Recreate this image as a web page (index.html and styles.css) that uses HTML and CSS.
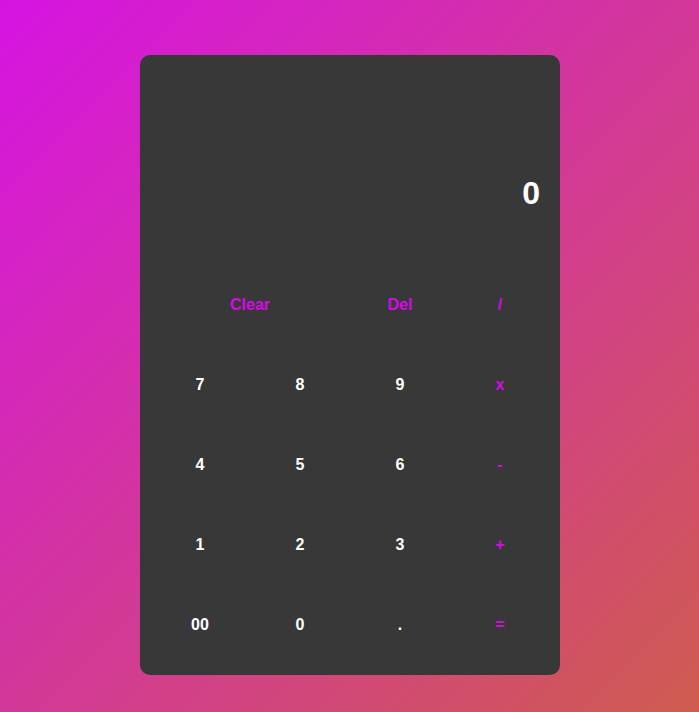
FILE: index.html
```html
<!DOCTYPE html>
<html lang="en">
<head>
<meta charset="utf-8">
<title>Calculator</title>
<link rel="stylesheet" href="styles.css">
</head>
<body>
<div class="calculator">
  <div class="display"><span class="value">0</span></div>
  <div class="keys">
    <button class="key accent span-2">Clear</button>
    <button class="key accent">Del</button>
    <button class="key accent">/</button>
    <button class="key">7</button>
    <button class="key">8</button>
    <button class="key">9</button>
    <button class="key accent">x</button>
    <button class="key">4</button>
    <button class="key">5</button>
    <button class="key">6</button>
    <button class="key accent">-</button>
    <button class="key">1</button>
    <button class="key">2</button>
    <button class="key">3</button>
    <button class="key accent">+</button>
    <button class="key">00</button>
    <button class="key">0</button>
    <button class="key">.</button>
    <button class="key accent">=</button>
  </div>
</div>
</body>
</html>
```
FILE: styles.css
```css
html, body {
  margin: 0;
  padding: 0;
}
body {
  min-height: 100vh;
  background: linear-gradient(to bottom right, #d614e2, #cf5c4f);
  font-family: "Liberation Sans", Arial, sans-serif;
  padding-top: 55px;
  padding-left: 1px;
  box-sizing: border-box;
}
.calculator {
  width: 420px;
  margin: 0 auto;
  box-sizing: border-box;
  padding: 10px;
  background: #383838;
  border-radius: 10px;
}
.display {
  height: 200px;
  box-sizing: border-box;
  display: flex;
  align-items: flex-end;
  justify-content: flex-end;
  padding: 0 10px 53px 0;
}
.value {
  color: #ffffff;
  font-size: 32px;
  font-weight: bold;
}
.keys {
  display: grid;
  grid-template-columns: repeat(4, 100px);
  grid-auto-rows: 80px;
}
.key {
  border: none;
  background: transparent;
  color: #ffffff;
  font-family: "Liberation Sans", Arial, sans-serif;
  font-size: 16px;
  font-weight: bold;
  padding: 0;
  margin: 0;
  cursor: pointer;
}
.key.accent {
  color: #d60ae6;
}
.span-2 {
  grid-column: span 2;
}
```
